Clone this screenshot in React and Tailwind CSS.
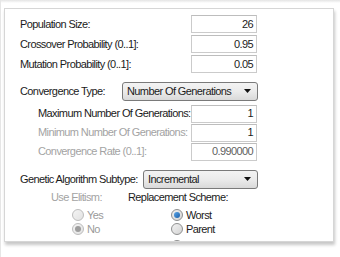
import React from 'react';

const font = { fontFamily: '"Liberation Sans", Arial, sans-serif' };

const TextBox = ({ value, muted }) => (
  <div
    className={`w-[66px] h-[18px] border border-[#cbcbcb] border-t-[#bdbdbd] bg-white flex items-center justify-end pr-[3px] ${
      muted ? 'text-[#5f5f5f]' : 'text-[#1b1b1b]'
    }`}
  >
    {value}
  </div>
);

const Select = ({ value, width }) => (
  <div
    className={`${width} h-[19px] rounded-[3px] border border-[#7a7a7a] bg-gradient-to-b from-[#f3f3f3] via-[#ebebeb] to-[#d9d9d9] flex items-center justify-between pl-[4px] pr-[6px] text-[#1b1b1b]`}
  >
    <span>{value}</span>
    <svg width="7" height="4" viewBox="0 0 7 4">
      <path d="M0 0h7L3.5 4z" fill="#111" />
    </svg>
  </div>
);

const Radio = ({ label, checked, disabled }) => (
  <div className="h-[14px] flex items-center gap-[3px]">
    <span
      className={`w-[12px] h-[12px] rounded-full border flex items-center justify-center bg-gradient-to-br ${
        disabled
          ? 'border-[#bcbcbc] from-[#f4f4f4] to-[#e2e2e2]'
          : 'border-[#8e8f8f] from-[#f2f2f2] to-[#d4d4d4]'
      }`}
    >
      {checked && (
        <span
          className={`w-[6px] h-[6px] rounded-full ${
            disabled ? 'bg-[#9d9d9d]' : 'bg-gradient-to-br from-[#5aa6e8] to-[#1c5fa8]'
          }`}
        />
      )}
    </span>
    {label && <span className={disabled ? 'text-[#9a9a9a]' : 'text-[#1b1b1b]'}>{label}</span>}
  </div>
);

export default function App() {
  return (
    <div
      style={font}
      className="w-[340px] h-[257px] bg-white relative overflow-hidden text-[11px] tracking-[-0.6px] leading-none border-l border-[#e6e6e6]"
    >
      <div className="h-[3px] bg-gradient-to-b from-[#e4e4e4] to-white" />
      <div className="ml-[3px] mt-[5px] w-[330px] h-[234px] border border-[#d6d6d6] bg-white shadow-[1px_3px_3px_rgba(0,0,0,0.22)] overflow-hidden">
        <div className="pl-[15px] pt-[5px]">
          <div className="h-[20px] flex items-center">
            <span className="w-[171px] text-[#1b1b1b]">Population Size:</span>
            <TextBox value="26" />
          </div>
          <div className="h-[20px] flex items-center">
            <span className="w-[171px] text-[#1b1b1b]">Crossover Probability (0..1]:</span>
            <TextBox value="0.95" />
          </div>
          <div className="h-[20px] flex items-center">
            <span className="w-[171px] text-[#1b1b1b]">Mutation Probability (0..1]:</span>
            <TextBox value="0.05" />
          </div>

          <div className="mt-[7px] h-[20px] flex items-center">
            <span className="w-[102px] text-[#1b1b1b]">Convergence Type:</span>
            <Select value="Number Of Generations" width="w-[136px]" />
          </div>

          <div className="mt-[3px] pl-[18px]">
            <div className="h-[19px] flex items-center">
              <span className="w-[153px] text-[#1b1b1b]">Maximum Number Of Generations:</span>
              <TextBox value="1" />
            </div>
            <div className="h-[19px] flex items-center">
              <span className="w-[153px] text-[#a3a3a3]">Minimum Number Of Generations:</span>
              <TextBox value="1" />
            </div>
            <div className="h-[19px] flex items-center">
              <span className="w-[153px] text-[#a3a3a3]">Convergence Rate (0..1]:</span>
              <TextBox value="0.990000" muted />
            </div>
          </div>

          <div className="mt-[8px] h-[20px] flex items-center">
            <span className="w-[123px] text-[#1b1b1b]">Genetic Algorithm Subtype:</span>
            <Select value="Incremental" width="w-[115px]" />
          </div>

          <div className="mt-[1px] flex">
            <div className="w-[108px] pl-[31px]">
              <div className="h-[14px] flex items-center text-[#a3a3a3]">Use Elitism:</div>
              <div className="mt-[4px] pl-[21px]">
                <Radio label="Yes" disabled />
                <Radio label="No" checked disabled />
              </div>
            </div>
            <div>
              <div className="h-[14px] flex items-center text-[#1b1b1b]">Replacement Scheme:</div>
              <div className="mt-[4px] pl-[43px]">
                <Radio label="Worst" checked />
                <Radio label="Parent" />
                <div className="mt-[3px]">
                  <Radio />
                </div>
              </div>
            </div>
          </div>
        </div>
      </div>
    </div>
  );
}
